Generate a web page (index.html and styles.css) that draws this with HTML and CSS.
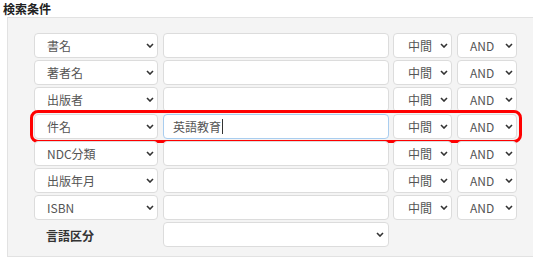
FILE: index.html
```html
<!DOCTYPE html>
<html>
	<head>
		<meta charset="utf-8" />
		<title>検索条件</title>
		<link rel="stylesheet" href="styles.css">
	</head>
	<body>
		<div class="title">検索条件</div>
		<div class="panel">
			<div class="row">
				<div class="sel field">書名<svg class="chev" width="8" height="5" viewBox="0 0 8 5"><path d="M1 1l3 3 3-3" /></svg></div>
				<div class="txt"></div>
				<div class="sel mode">中間<svg class="chev" width="8" height="5" viewBox="0 0 8 5"><path d="M1 1l3 3 3-3" /></svg></div>
				<div class="sel op">AND<svg class="chev" width="8" height="5" viewBox="0 0 8 5"><path d="M1 1l3 3 3-3" /></svg></div>
			</div>
			<div class="row">
				<div class="sel field">著者名<svg class="chev" width="8" height="5" viewBox="0 0 8 5"><path d="M1 1l3 3 3-3" /></svg></div>
				<div class="txt"></div>
				<div class="sel mode">中間<svg class="chev" width="8" height="5" viewBox="0 0 8 5"><path d="M1 1l3 3 3-3" /></svg></div>
				<div class="sel op">AND<svg class="chev" width="8" height="5" viewBox="0 0 8 5"><path d="M1 1l3 3 3-3" /></svg></div>
			</div>
			<div class="row">
				<div class="sel field">出版者<svg class="chev" width="8" height="5" viewBox="0 0 8 5"><path d="M1 1l3 3 3-3" /></svg></div>
				<div class="txt"></div>
				<div class="sel mode">中間<svg class="chev" width="8" height="5" viewBox="0 0 8 5"><path d="M1 1l3 3 3-3" /></svg></div>
				<div class="sel op">AND<svg class="chev" width="8" height="5" viewBox="0 0 8 5"><path d="M1 1l3 3 3-3" /></svg></div>
			</div>
			<div class="row marked">
				<div class="sel field">件名<svg class="chev" width="8" height="5" viewBox="0 0 8 5"><path d="M1 1l3 3 3-3" /></svg></div>
				<div class="txt focus">英語教育<span class="caret"></span></div>
				<div class="sel mode">中間<svg class="chev" width="8" height="5" viewBox="0 0 8 5"><path d="M1 1l3 3 3-3" /></svg></div>
				<div class="sel op">AND<svg class="chev" width="8" height="5" viewBox="0 0 8 5"><path d="M1 1l3 3 3-3" /></svg></div>
				<span class="ring"></span>
			</div>
			<div class="row">
				<div class="sel field">NDC分類<svg class="chev" width="8" height="5" viewBox="0 0 8 5"><path d="M1 1l3 3 3-3" /></svg></div>
				<div class="txt"></div>
				<div class="sel mode">中間<svg class="chev" width="8" height="5" viewBox="0 0 8 5"><path d="M1 1l3 3 3-3" /></svg></div>
				<div class="sel op">AND<svg class="chev" width="8" height="5" viewBox="0 0 8 5"><path d="M1 1l3 3 3-3" /></svg></div>
			</div>
			<div class="row">
				<div class="sel field">出版年月<svg class="chev" width="8" height="5" viewBox="0 0 8 5"><path d="M1 1l3 3 3-3" /></svg></div>
				<div class="txt"></div>
				<div class="sel mode">中間<svg class="chev" width="8" height="5" viewBox="0 0 8 5"><path d="M1 1l3 3 3-3" /></svg></div>
				<div class="sel op">AND<svg class="chev" width="8" height="5" viewBox="0 0 8 5"><path d="M1 1l3 3 3-3" /></svg></div>
			</div>
			<div class="row">
				<div class="sel field">ISBN<svg class="chev" width="8" height="5" viewBox="0 0 8 5"><path d="M1 1l3 3 3-3" /></svg></div>
				<div class="txt"></div>
				<div class="sel mode">中間<svg class="chev" width="8" height="5" viewBox="0 0 8 5"><path d="M1 1l3 3 3-3" /></svg></div>
				<div class="sel op">AND<svg class="chev" width="8" height="5" viewBox="0 0 8 5"><path d="M1 1l3 3 3-3" /></svg></div>
			</div>
			<div class="row">
				<div class="label">言語区分</div>
				<div class="sel lang"><svg class="chev" width="8" height="5" viewBox="0 0 8 5"><path d="M1 1l3 3 3-3" /></svg></div>
			</div>
		</div>
	</body>
</html>
```

FILE: styles.css
```css
body, html {
	margin: 0;
	padding: 0;
	background: #fff;
	overflow: hidden;
	font-family: "Noto Sans CJK JP", "Liberation Sans", sans-serif;
}

.title {
	height: 17px;
	line-height: 17px;
	padding-left: 3px;
	font-size: 12px;
	font-weight: bold;
	color: #222;
}

.panel {
	margin-left: 7px;
	width: 540px;
	height: 240px;
	box-sizing: border-box;
	padding: 15px 0 0 26px;
	background: #f4f4f4;
	border: 1px solid #e2e2e2;
}

.row {
	position: relative;
	display: flex;
	width: 483px;
	height: 25px;
	margin-bottom: 2px;
}

.sel, .txt {
	box-sizing: border-box;
	height: 25px;
	background: #fff;
	border: 1px solid #dcdcdc;
	border-radius: 4px;
	font-size: 12px;
	color: #555;
	display: flex;
	align-items: center;
}

.sel {
	justify-content: space-between;
	padding: 0 3px 0 12px;
}

.chev path {
	fill: none;
	stroke: #333;
	stroke-width: 1.6;
}

.field {
	width: 124px;
}

.txt {
	width: 226px;
	margin-left: 5px;
	padding-left: 9px;
}

.txt.focus {
	border-color: #a9cdef;
}

.caret {
	display: inline-block;
	width: 0;
	height: 15px;
	margin-left: 1px;
	border-left: 1px solid #333;
}

.mode {
	width: 59px;
	margin-left: 4px;
	padding-left: 14px;
}

.op {
	width: 60px;
	margin-left: 5px;
}

.label {
	width: 124px;
	box-sizing: border-box;
	padding-left: 12px;
	line-height: 27px;
	font-size: 12px;
	font-weight: bold;
	color: #333;
}

.lang {
	width: 226px;
	margin-left: 5px;
	justify-content: flex-end;
	padding-right: 4px;
}

.ring {
	position: absolute;
	top: -4px;
	left: -4px;
	right: -5px;
	bottom: -4px;
	border: 3px solid #f00;
	border-radius: 8px;
}
```
